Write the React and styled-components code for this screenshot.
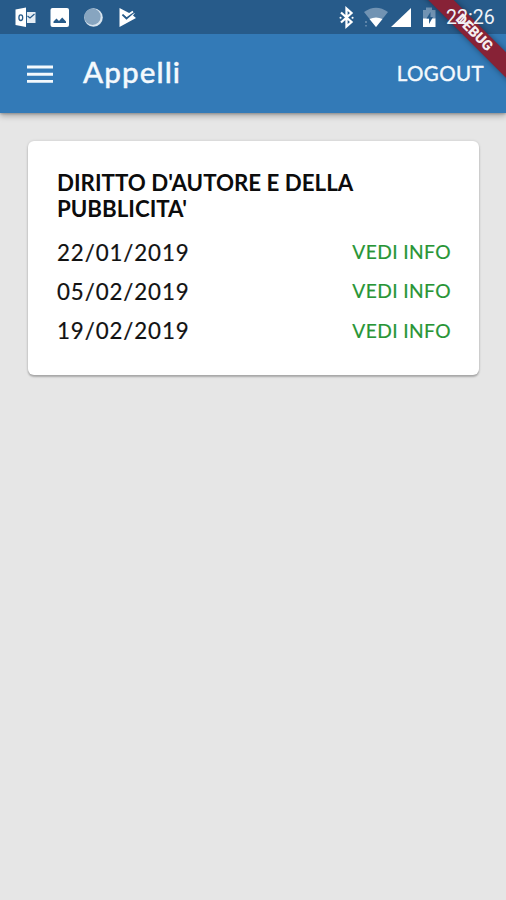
import React from "react";
import styled, { createGlobalStyle } from "styled-components";

const GlobalStyle = createGlobalStyle`
  * { box-sizing: border-box; }
  body { margin: 0; background: #e6e6e6; font-family: Lato, "Open Sans", sans-serif; }
`;

const Screen = styled.div`
  position: relative;
  height: 900px;
  overflow: hidden;
  background: #e6e6e6;
`;

const Header = styled.header`
  position: relative;
  overflow: hidden;
  height: 112.5px;
  background: #337ab7;
`;

const HeaderShadow = styled.div`
  box-shadow: 0 3px 6px rgba(0, 0, 0, 0.28), 0 1px 2px rgba(0, 0, 0, 0.2);
`;

const StatusBar = styled.div`
  height: 34px;
  padding: 0 10px 0 14px;
  display: flex;
  justify-content: space-between;
  background: #275b8a;
`;

const StatusIcons = styled.svg`
  display: block;
  flex: none;
  height: 34px;
  width: ${(p) => p.$width}px;
`;

const StatusRight = styled.div`
  display: flex;
`;

const Clock = styled.span`
  position: relative;
  z-index: 3;
  width: 50px;
  margin-left: 8px;
  font: 400 19.6px/36px Roboto, sans-serif;
  color: #eef3f8;
  white-space: nowrap;
`;

const Toolbar = styled.div`
  height: 78.5px;
  padding: 0 22px 0 27px;
  display: flex;
  align-items: center;
  color: #f4f9fd;
`;

const MenuIcon = styled.svg`
  display: block;
  width: 26px;
  height: 20px;
  margin-top: 1px;
`;

const Title = styled.h1`
  margin: -3px 0 0 30px;
  flex: 1;
  font-size: 29.6px;
  font-weight: 500;
  letter-spacing: 1.1px;
  -webkit-text-stroke: 0.4px currentColor;
`;

const Logout = styled.button`
  border: 0;
  padding: 0;
  background: none;
  color: inherit;
  font: 400 20.5px/24px Lato, sans-serif;
  letter-spacing: 0.4px;
  -webkit-text-stroke: 0.4px currentColor;
`;

const Banner = styled.div`
  position: absolute;
  z-index: 2;
  left: 403.5px;
  top: 23.5px;
  width: 140px;
  height: 18px;
  transform: rotate(45deg);
  background: #872236;
  box-shadow: 0 0 6px rgba(0, 0, 0, 0.4);
  color: #f6eef1;
  font: 900 14.2px/17px Roboto, sans-serif;
  text-align: center;
`;

const Card = styled.section`
  margin: 28px 27px 0 28px;
  height: 234px;
  padding: 29px 28px 0 29px;
  border-radius: 6px;
  background: #fff;
  box-shadow: 0 2px 2px rgba(0, 0, 0, 0.24), 0 0 3px rgba(0, 0, 0, 0.14);
`;

const Course = styled.h2`
  margin: 0 0 10.5px;
  font-size: 22.3px;
  line-height: 26.5px;
  font-weight: 700;
  color: #0c0c0c;
`;

const Row = styled.div`
  height: 39.3px;
  display: flex;
  align-items: center;
  justify-content: space-between;
`;

const ExamDate = styled.span`
  font-size: 22.3px;
  line-height: 26px;
  letter-spacing: 0.9px;
  color: #111;
  -webkit-text-stroke: 0.2px currentColor;
`;

const InfoButton = styled.button`
  border: 0;
  padding: 0;
  margin-top: -1px;
  background: none;
  color: #289535;
  font: 400 19.2px/24px Lato, sans-serif;
  letter-spacing: 0.4px;
  -webkit-text-stroke: 0.2px currentColor;
`;

const dates = ["22/01/2019", "05/02/2019", "19/02/2019"];

function Notifications() {
  return (
    <StatusIcons $width={124} viewBox="14 0 124 34" aria-hidden="true">
      <path d="M15.5 9.500 26 7.500v19.500l-10.500-2z" fill="#fff" />
      <path d="M27 12h8.500v11H27z" fill="#e5edf4" />
      <path d="m27.500 16 2.500 2 4.500-4" fill="none" stroke="#275b8a" strokeWidth="1.300" />
      <ellipse cx="20.800" cy="17.700" rx="1.900" ry="2.800" fill="none" stroke="#275b8a" strokeWidth="1.300" />
      <rect x="50.500" y="8" width="18.500" height="19" rx="2" fill="#fff" />
      <path d="M53.500 23v-1.500l3-3 2.500 2.500 3.200-3.500 3.800 4V23z" fill="#275b8a" />
      <circle cx="93.500" cy="17.500" r="9.300" fill="#d8e4ee" />
      <circle cx="92.500" cy="16.700" r="8.200" fill="#87a5c0" />
      <path d="M119.500 8v19l16.500-9-3-2.500 2-2.500-4 1z" fill="#fff" />
      <path d="m122.500 14.500 4 3.800 7-6" fill="none" stroke="#275b8a" strokeWidth="2" />
      <path d="m123 12.500 3.800 3.300 6.200-4.300" fill="none" stroke="#fff" strokeWidth="1.800" />
    </StatusIcons>
  );
}

function SystemIcons() {
  return (
    <StatusIcons $width={100} viewBox="338 0 100 34" aria-hidden="true">
      <path d="m341 12.500 10.500 9.500-5 4.500V8.500l5 4.500L341 22.500" fill="none" stroke="#fff" strokeWidth="2.300" />
      <path d="M340.500 17.700h.1M352.500 17.700h.1" stroke="#fff" strokeWidth="2" strokeLinecap="round" />
      <path d="M364 12q12-8.500 24 0l-12 15z" fill="#7193b3" />
      <path d="M369.500 19q6.500-3 13 0l-6.500 8z" fill="#fff" />
      <path d="M366 21v2M366 25v1.500" stroke="#7193b3" strokeWidth="1.500" />
      <path d="M391 27 411 8v19z" fill="#fff" />
      <path d="M423 10h3V7.500h6V10h3.500v9H423z" fill="#7193b3" />
      <path d="M423 18.500h12.500V27H423z" fill="#fff" />
      <path d="m430.500 12-4 6.500h2.500V24l4-7h-2.500z" fill="#275b8a" />
    </StatusIcons>
  );
}

export default function App() {
  return (
    <>
      <GlobalStyle />
      <Screen>
        <HeaderShadow>
          <Header>
            <Banner>DEBUG</Banner>
            <StatusBar>
              <Notifications />
              <StatusRight>
                <SystemIcons />
                <Clock>22:26</Clock>
              </StatusRight>
            </StatusBar>
            <Toolbar>
              <MenuIcon viewBox="0 0 26 20" aria-label="Menu">
                <path d="M0 3h26M0 10.200h26M0 17.400h26" stroke="currentColor" strokeWidth="2.900" />
              </MenuIcon>
              <Title>Appelli</Title>
              <Logout>LOGOUT</Logout>
            </Toolbar>
          </Header>
        </HeaderShadow>
        <Card>
          <Course>
            DIRITTO D'AUTORE E DELLA
            <br />
            PUBBLICITA'
          </Course>
          {dates.map((date) => (
            <Row key={date}>
              <ExamDate>{date}</ExamDate>
              <InfoButton>VEDI INFO</InfoButton>
            </Row>
          ))}
        </Card>
      </Screen>
    </>
  );
}
